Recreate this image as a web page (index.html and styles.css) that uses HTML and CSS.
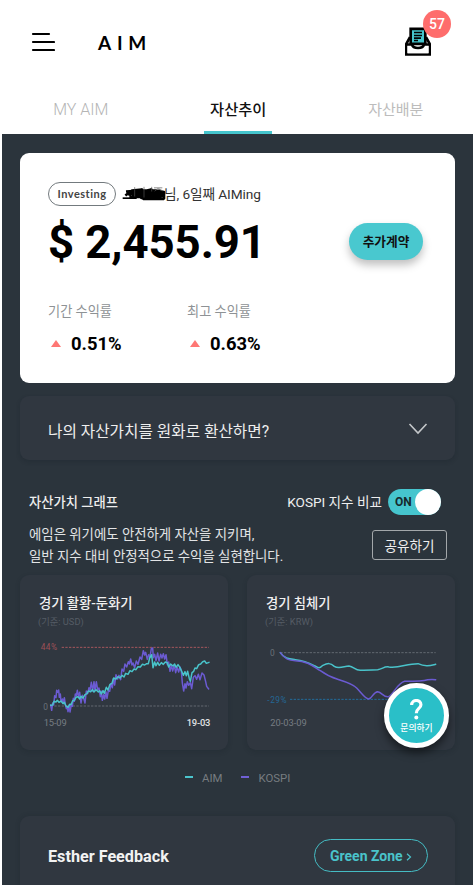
FILE: index.html
```html
<!DOCTYPE html>
<html lang="ko">
<head>
<meta charset="utf-8">
<meta name="viewport" content="width=device-width">
<title>AIM</title>
<link rel="stylesheet" href="styles.css">
</head>
<body>
<header class="header">
  <svg class="menu" viewBox="0 0 24 20"><path d="M2 2H18M2 10H23M2 18H23"/></svg>
  <div class="logo">AIM</div>
  <div class="inbox">
    <svg class="inbox-icon" viewBox="0 0 78 86">
      <path d="M15 30L4 50V82H74V50L63 30" fill="#fff" stroke="#000" stroke-width="8"/>
      <path d="M17 5H61V50H17Z" fill="#45c5cd" stroke="#000" stroke-width="8"/>
      <path d="M7 54H22C24 63 53 63 55 54H71V78H7Z" fill="#fff"/>
      <path d="M4 52H21C24 66 54 66 57 52H74" fill="none" stroke="#000" stroke-width="8"/>
      <path d="M27 16H51M27 25H51M27 33H48M27 40H39" stroke="#000" stroke-width="5"/>
    </svg>
    <span class="badge">57</span>
  </div>
</header>
<nav class="tabs">
  <a class="tab">MY AIM</a>
  <a class="tab active">자산추이</a>
  <a class="tab">자산배분</a>
</nav>
<main class="main">
  <section class="balance">
    <div class="owner">
      <span class="state">Investing</span>
      <svg class="scribble" viewBox="0 0 132 44">
        <path class="base" d="M2 36H44"/>
        <path d="M10 28L30 13L60 10L22 25L88 10L34 29L112 14L46 31L124 20L58 35L125 28L64 38H126M12 16L58 13L100 13L126 18V37L92 36L65 36L52 32L22 32"/>
        <path class="thin" d="M38 3V31M66 2V34M89 2V16M96 5H121M108 7L98 15M109 7L122 14"/>
      </svg>
      <span class="owner-text">님, 6일째 AIMing</span>
    </div>
    <div class="amount-row">
      <strong class="amount">$ 2,455.91</strong>
      <button class="contract">추가계약</button>
    </div>
    <div class="rates">
      <div class="rate"><span class="rate-label">기간 수익률</span><strong class="rate-value"><i class="up"></i>0.51%</strong></div>
      <div class="rate"><span class="rate-label">최고 수익률</span><strong class="rate-value"><i class="up"></i>0.63%</strong></div>
    </div>
  </section>
  <section class="convert">
    <span class="convert-text">나의 자산가치를 원화로 환산하면?</span>
    <svg class="chevron" viewBox="0 0 20 12"><path d="M1.500 1L10 10L18.500 1"/></svg>
  </section>
  <section class="graph">
    <div class="graph-head">
      <h2 class="graph-title">자산가치 그래프</h2>
      <span class="compare">KOSPI 지수 비교</span>
      <span class="switch"><b>ON</b><i class="knob"></i></span>
    </div>
    <div class="graph-info">
      <p class="desc">에임은 위기에도 안전하게 자산을 지키며,<br>일반 지수 대비 안정적으로 수익을 실현합니다.</p>
      <button class="share">공유하기</button>
    </div>
    <div class="charts">
      <article class="chart-card">
        <h3 class="chart-title">경기 활황-둔화기</h3>
        <p class="basis">(기준: USD)</p>
        <svg class="chart" viewBox="0 180 624 345">
          <path class="dash red" d="M125 217H567"/>
          <path class="dash gray" d="M92 393H567"/>
          <text class="lab redtext" x="62" y="226" textLength="49">44%</text>
          <text class="lab" x="70" y="404">0</text>
          <path class="line kospi" d="M92 390L95 406L98 384L101 390L104 362L108 368L110 346L113 352L116 345L118 367L121 357L123 380L127 372L129 384L133 368L136 389L139 401L142 394L144 410L148 390L150 411L154 389L157 394L160 370L163 379L166 357L169 362L172 346L176 367L179 352L183 384L187 361L191 370L195 384L199 348L203 356L207 338L210 347L214 322L218 348L222 320L225 346L229 320L233 345L237 339L241 365L244 349L247 376L251 359L254 372L258 351L261 370L265 347L269 349L273 326L277 338L280 311L284 330L288 299L293 312L297 301L302 314L306 282L311 289L315 267L320 276L325 260L328 267L332 252L336 270L339 264L344 278L349 258L354 268L360 246L365 253L370 227L374 240L377 232L382 253L386 239L390 246L394 221L398 219L400 248L404 238L408 257L413 234L417 258L422 238L426 249L430 236L434 252L438 239L442 269L446 261L450 289L454 270L458 288L463 271L467 293L471 276L476 291L480 276L484 287L487 324L491 348L495 326L498 339L502 320L506 331L511 323L515 341L520 307L525 302L530 313L535 298L540 314L546 294L552 300L557 320L560 334L566 342"/>
          <path class="line aim" d="M92 391L98 390L102 379L108 381L112 376L117 382L123 378L129 386L133 382L138 393L144 397L149 388L153 389L158 377L164 375L168 367L174 365L179 372L183 364L189 369L195 359L201 356L205 348L212 350L217 344L222 351L228 344L235 351L239 347L244 357L249 347L253 355L259 337L264 345L270 328L276 325L281 309L288 312L294 305L300 309L306 301L312 306L317 295L324 298L330 287L336 290L342 282L348 284L354 275L361 276L367 268L374 270L380 266L385 266L389 249L395 239L399 278L404 261L408 272L413 262L418 271L424 263L430 268L436 261L442 263L446 276L452 267L459 273L464 267L468 277L474 269L480 278L485 289L490 301L495 290L499 302L503 289L508 311L511 319L516 293L521 289L525 279L530 281L536 269L542 267L548 260L554 258L559 265L567 262"/>
          <text class="date" x="71" y="453" textLength="69">15-09</text>
          <text class="date now" x="500" y="453" textLength="71">19-03</text>
        </svg>
      </article>
      <article class="chart-card">
        <h3 class="chart-title">경기 침체기</h3>
        <p class="basis">(기준: KRW)</p>
        <svg class="chart" viewBox="21 180 624 345">
          <path class="dash gray" d="M121 233H587"/>
          <path class="dash blue" d="M150 373H587"/>
          <text class="lab" x="90" y="243">0</text>
          <text class="lab bluetext" x="82" y="384" textLength="58">-29%</text>
          <path class="line aim" d="M121 233C132 251 148 252 166 254C196 257 208 264 225 273C236 280 239 280 247 272C264 264 271 263 283 274C295 283 312 274 327 273C342 275 345 287 362 286C382 285 399 284 413 284C428 282 433 273 447 276C479 280 499 266 534 266C555 276 570 272 587 268"/>
          <path class="line kospi" d="M121 233C137 254 146 256 166 257C203 258 222 276 241 287C263 303 276 308 293 313C319 321 337 326 350 339C365 354 375 371 386 372C397 371 399 351 413 350C426 352 432 369 446 365C463 353 474 324 494 319C527 319 548 319 563 314C573 313 580 313 587 314"/>
          <text class="date" x="91" y="453" textLength="109">20-03-09</text>
        </svg>
      </article>
    </div>
    <div class="legend"><i class="key"></i><span class="key-aim">AIM</span><i class="key violet"></i><span class="key-kospi">KOSPI</span></div>
  </section>
  <section class="feedback">
    <h2 class="feedback-title">Esther Feedback</h2>
    <button class="zone"><span class="zone-text">Green Zone</span><svg class="arrow" viewBox="0 0 6 8"><path d="M1 .8L4.500 4L1 7.200"/></svg></button>
  </section>
</main>
<button class="help">
  <svg class="question" viewBox="0 0 38 62"><path d="M5 18C5 0 33 0 33 17C33 29 19 28 19 43"/><circle cx="19" cy="56" r="6"/></svg>
  <span class="help-text">문의하기</span>
</button>
</body>
</html>
```

FILE: styles.css
```css
* { box-sizing: border-box; }
body {
  margin: 0;
  width: 474px;
  height: 885px;
  overflow: hidden;
  position: relative;
  background: #fff;
  font-family: Roboto, "Noto Sans CJK KR", sans-serif;
  color: #000;
  white-space: nowrap;
}
h2, h3, p { margin: 0; }
button { font-family: inherit; padding: 0; border: 0; }
svg { display: block; flex: none; }

.header { display: flex; height: 84px; padding: 0 23px 0 31px; }
.menu { width: 24px; height: 20px; margin-top: 32px; fill: none; stroke: #000; stroke-width: 2.2; stroke-linecap: round; }
.logo { margin: 31px 0 0 43px; font: 700 19px/24px Lato, sans-serif; letter-spacing: 5.700px; }
.inbox { position: relative; width: 46px; height: 56px; margin-left: auto; }
.inbox-icon { width: 26px; height: 29px; margin: 27px 0 0 0; }
.badge { position: absolute; left: 18px; top: 10px; width: 28px; height: 28px; border-radius: 50%; background: #fe6d6c; color: #fff; font-size: 14px; line-height: 29px; font-weight: 500; text-align: center; }

.tabs { display: grid; grid-template-columns: repeat(3, 157.500px); height: 50px; padding-left: 2px; }
.tab { height: 50px; color: #b5b5b5; font-size: 16px; line-height: 52px; text-align: center; font-weight: 300; }
.tab:last-child { font-size: 15px; font-weight: 400; color: #bcbcbc; }
.tab.active { color: #111; font-size: 15.300px; font-weight: 500; width: 68px; justify-self: center; border-bottom: 3px solid #45c5cd; }

.main { width: 471px; height: 751px; margin-left: 2px; padding: 19px 18px 0; background: #2b343c; }
.balance { height: 230px; border-radius: 9px; background: #fff; padding: 28px 32px 0 28px; }
.owner { display: flex; align-items: center; height: 25px; }
.state { width: 68px; height: 24px; border: 1px solid #737a7e; border-radius: 12px; text-align: center; font: 700 11px/22px Lato, sans-serif; letter-spacing: .5px; color: #444; }
.scribble { width: 44px; height: 15px; margin-left: 6px; fill: none; stroke: #000; stroke-width: 8; stroke-linejoin: round; }
.scribble .base { stroke-width: 5; }
.scribble .thin { stroke: #555; stroke-width: 2; }
.owner-text { margin: -2px 0 0 -2px; font-size: 13.700px; color: #333; letter-spacing: -.1px; }
.amount-row { display: flex; justify-content: space-between; height: 74px; }
.amount { font-size: 45.600px; line-height: 73px; font-weight: 700; letter-spacing: -.1px; }
.contract { width: 74px; height: 37px; margin-top: 17px; border-radius: 19px; background: #49c8cf; font-size: 12.700px; line-height: 35px; font-weight: 700; color: #111; box-shadow: 0 5px 8px rgba(0,0,0,.25); }
.rates { display: flex; padding-top: 20px; }
.rate { width: 139px; display: flex; flex-direction: column; }
.rate-label { height: 23px; font-size: 13.200px; line-height: 24px; color: #8e9295; }
.rate-value { display: flex; align-items: center; height: 28px; margin-top: 6px; font-size: 18.400px; font-weight: 700; }
.up { margin: 0 10px 0 3px; border: 5px solid transparent; border-top: 0; border-bottom: 7px solid #fe7774; }

.convert { display: flex; align-items: center; justify-content: space-between; height: 64px; margin-top: 13px; padding: 5px 27px 0 28px; border-radius: 9px; background: #303740; color: #eee; box-shadow: 0 2px 4px rgba(20,28,35,.22); }
.convert-text { font-size: 15.700px; }
.chevron { width: 20px; height: 12px; margin-top: -3px; fill: none; stroke: #c4c7ca; stroke-width: 1.6; }

.graph-head { display: flex; align-items: center; height: 28px; margin-top: 28px; padding: 0 14px 0 9px; color: #eee; }
.graph-title { margin-top: -2px; font-size: 13.300px; font-weight: 500; }
.compare { margin: -2px 0 0 auto; font-size: 13.600px; }
.switch { position: relative; display: block; width: 53px; height: 26px; margin-left: 6px; border-radius: 13px; background: #46c5ce; color: #17292d; }
.switch b { display: block; padding-left: 7px; font-size: 12px; line-height: 27px; font-weight: 700; }
.knob { position: absolute; right: 0; top: 0; width: 26px; height: 26px; border-radius: 50%; background: #fff; }
.graph-info { display: flex; justify-content: space-between; height: 59px; padding: 7px 8px 0 9px; color: #e2e4e6; }
.desc { padding-top: 1px; font-size: 13.400px; line-height: 21.500px; }
.share { width: 75px; height: 30px; margin-top: 7px; border: 1px solid #a3a7aa; border-radius: 3px; background: none; color: #eee; font-size: 13.600px; }
.charts { display: grid; grid-template-columns: 208px 208px; gap: 19px; }
.chart-card { height: 175px; border-radius: 9px; background: #303740; box-shadow: 0 2px 5px rgba(20,28,35,.2); }
.chart-title { height: 39px; padding: 18px 0 0 19px; font-size: 13.300px; line-height: 21px; font-weight: 500; color: #f0f0f0; }
.basis { height: 21px; padding-left: 18px; font-size: 9.300px; line-height: 15px; color: #555c65; }
.chart { width: 208px; height: 115px; }
.line { fill: none; stroke-width: 4.500; stroke-linejoin: round; stroke-linecap: round; }
.aim { stroke: #49c3ca; }
.kospi { stroke: #6b5bd2; }
.dash { fill: none; stroke-width: 3; stroke-dasharray: 7 4; }
.red { stroke: #a7575c; }
.gray { stroke: #626970; }
.blue { stroke: #226d9c; }
.lab { font-size: 25px; fill: #6a7178; }
.redtext { fill: #9d5057; }
.bluetext { fill: #246795; }
.date { font-size: 28px; fill: #777d83; }
.now { fill: #e0e2e4; font-weight: 500; }
.legend { display: flex; align-items: center; height: 22px; margin-top: 16px; padding: 2px 0 0 165px; font-size: 11.400px; color: #777c80; }
.key { width: 8px; height: 2px; margin-top: -2px; background: #4bc5cd; }
.key.violet { background: #7060d5; margin-left: 19px; }
.legend span { margin-left: 9px; }

.feedback { display: flex; justify-content: space-between; height: 90px; margin-top: 28px; padding: 23px 27px 0 28px; border-radius: 9px; background: #303740; box-shadow: 0 0 5px rgba(20,28,35,.2); }
.feedback-title { font-size: 16.200px; line-height: 35px; font-weight: 700; color: #f2f2f2; }
.zone { display: flex; align-items: center; width: 114px; height: 33px; padding-left: 15px; border: 1.500px solid #45bcc4; border-radius: 17px; background: none; color: #4ac3cb; font-size: 14px; font-weight: 700; }
.arrow { width: 6px; height: 8px; margin: 2px 0 0 3px; fill: none; stroke: #4ac3cb; stroke-width: 1.2; }

.help { position: absolute; left: 384px; top: 683px; display: flex; flex-direction: column; align-items: center; width: 65px; height: 65px; padding-top: 11px; border: 5px solid #fff; border-radius: 50%; background: #2abfc8; color: #fff; box-shadow: 0 5px 9px rgba(0,0,0,.5); }
.question { width: 12.600px; height: 20.600px; fill: none; stroke: #fff; stroke-width: 9.500; }
.question circle { fill: #fff; stroke: none; }
.help-text { margin-top: 2px; font-size: 8.800px; line-height: 13px; font-weight: 500; }
```
